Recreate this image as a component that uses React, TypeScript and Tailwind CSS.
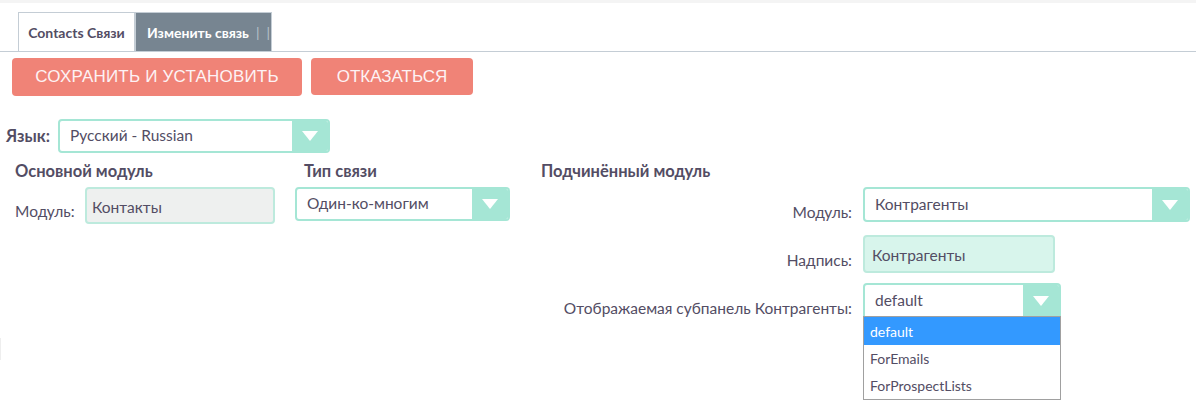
import type { ReactNode } from 'react'

const font = { fontFamily: 'Lato, "Noto Sans", sans-serif' }

function Arrow() {
  return (
    <svg width="16" height="10" viewBox="0 0 16 10" aria-hidden="true">
      <path d="M0 0 H16 L8 10 Z" fill="#ffffff" />
    </svg>
  )
}

function Select({ value, className = '', open = false }: { value: string; className?: string; open?: boolean }) {
  return (
    <div
      className={`flex items-stretch border-2 border-[#a5e6d5] bg-white overflow-hidden ${
        open ? 'rounded-t-[4px]' : 'rounded-[4px]'
      } ${className}`}
    >
      <div className="flex-1 flex items-center pl-[10px] text-[15.5px] text-[#534d64]">{value}</div>
      <div className="w-[36px] bg-[#a5e6d5] flex items-center justify-center">
        <Arrow />
      </div>
    </div>
  )
}

function Row({ label, children, className = '' }: { label: string; children: ReactNode; className?: string }) {
  return (
    <div className={`flex items-start ${className}`}>
      <div className="w-[323px] shrink-0 text-right pr-[11px] pt-[14px] text-[15.5px] text-[#534d64]">{label}</div>
      {children}
    </div>
  )
}

export default function App() {
  return (
    <div className="w-[1196px] h-[409px] bg-white relative overflow-hidden" style={font}>
      <div className="h-[3px] bg-[#f4f4f4]" />

      {/* tabs */}
      <div className="mt-[9px] flex border-b border-[#c4cdd5] pl-[18px]">
        <div className="w-[117px] h-[39px] border border-b-0 border-[#c4cdd5] flex items-center justify-center text-[14px] font-bold text-[#534d64]">
          Contacts Связи
        </div>
        <div className="w-[137px] h-[39px] bg-[#778591] border border-b-0 border-[#c4cdd5] flex items-center pl-[11px] text-[14px] font-bold text-white">
          Изменить связь
          <span className="ml-[7px] font-normal text-[#b8c2cb]">|</span>
          <span className="ml-[7px] font-normal text-[#b8c2cb]">|</span>
        </div>
      </div>

      {/* buttons */}
      <div className="mt-[6px] flex gap-[9px] pl-[12px]">
        <button
          type="button"
          className="w-[290px] h-[38px] rounded-[4px] bg-[#f08377] text-[#fdf2f4] text-[17px] tracking-[0.2px]"
          style={{ fontFamily: '"Liberation Sans", Arial, sans-serif' }}
        >
          СОХРАНИТЬ И УСТАНОВИТЬ
        </button>
        <button
          type="button"
          className="w-[162px] h-[37px] rounded-[4px] bg-[#f08377] text-[#fdf2f4] text-[17px]"
          style={{ fontFamily: '"Liberation Sans", Arial, sans-serif' }}
        >
          ОТКАЗАТЬСЯ
        </button>
      </div>

      {/* language */}
      <div className="mt-[23px] flex items-center pl-[6px]">
        <span className="w-[52px] text-[16.5px] font-bold text-[#534d64]">Язык:</span>
        <Select value="Русский - Russian" className="w-[272px] h-[34px]" />
      </div>

      {/* columns */}
      <div className="mt-[3px] flex">
        <div className="w-[295px] pl-[15px]">
          <div className="h-[31px] flex items-center text-[16.5px] font-bold text-[#534d64]">Основной модуль</div>
          <div className="flex items-start">
            <span className="w-[70px] pt-[13px] text-[15.5px] text-[#534d64]">Модуль:</span>
            <div className="w-[190px] h-[37px] rounded-[4px] border-2 border-[#bdeadd] bg-[#eef0ef] pl-[5px] pt-[7px] text-[15.5px] text-[#534d64]">
              Контакты
            </div>
          </div>
        </div>

        <div className="w-[245px]">
          <div className="h-[31px] flex items-center pl-[9px] text-[16.5px] font-bold text-[#534d64]">Тип связи</div>
          <Select value="Один-ко-многим" className="w-[215px] h-[34px]" />
        </div>

        <div className="flex-1">
          <div className="h-[31px] flex items-center pl-[1px] text-[16.5px] font-bold text-[#534d64]">Подчинённый модуль</div>
          <Row label="Модуль:">
            <Select value="Контрагенты" className="w-[327px] h-[35px]" />
          </Row>
          <Row label="Надпись:" className="mt-[11px]">
            <div className="w-[192px] h-[38px] rounded-[4px] border-2 border-[#bdeadd] bg-[#d8f5ec] pl-[7px] pt-[7px] text-[15.5px] text-[#534d64]">
              Контрагенты
            </div>
          </Row>
          <Row label="Отображаемая субпанель Контрагенты:" className="mt-[10px]">
            <div className="w-[198px]">
              <Select value="default" open className="w-[198px] h-[33px] border-b-0" />
              <div className="border border-[#a0a0a0] bg-white text-[14px] text-[#534d64]">
                <div className="h-[28px] flex items-center pl-[6px] bg-[#3399ff] text-white">default</div>
                <div className="h-[27px] flex items-center pl-[6px]">ForEmails</div>
                <div className="h-[27px] flex items-center pl-[6px]">ForProspectLists</div>
              </div>
            </div>
          </Row>
        </div>
      </div>

      <div className="absolute left-0 top-[338px] w-px h-[22px] bg-[#eeeeee]" />
    </div>
  )
}
